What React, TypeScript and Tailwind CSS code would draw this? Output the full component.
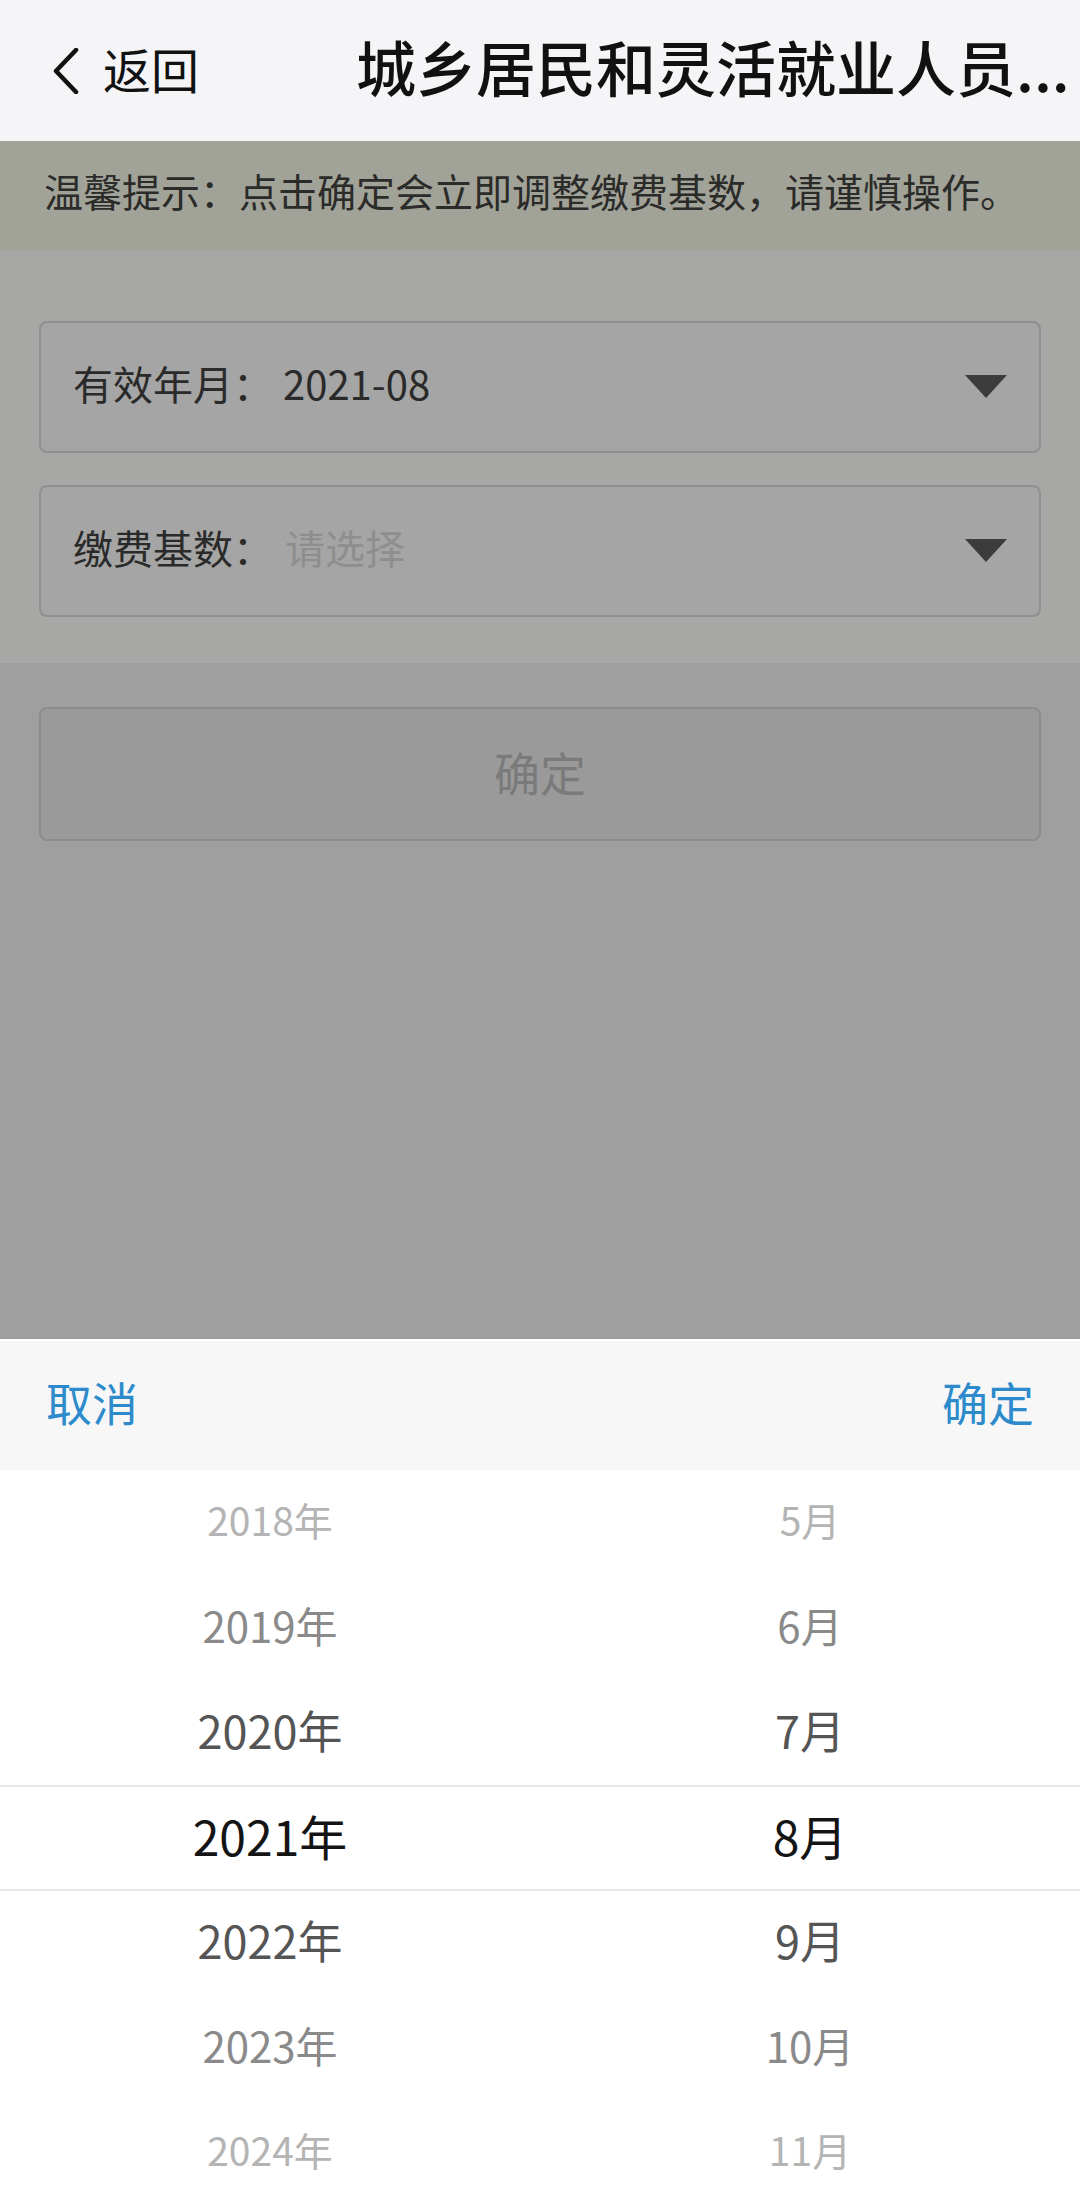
import React from 'react'

const years = ['2018年', '2019年', '2020年', '2021年', '2022年', '2023年', '2024年']
const months = ['5月', '6月', '7月', '8月', '9月', '10月', '11月']

// distance from the selected row -> look of the wheel item
const rowStyle = [
    'text-[48px] text-[#141414]',
    'text-[45px] text-[#555555]',
    'text-[42px] text-[#8a8a8a]',
    'text-[39px] text-[#b4b4b4]',
]

const SelectField = ({ label, value, placeholder }: { label: string; value?: string; placeholder?: string }) => {
    return (
        <div className="h-[132px] rounded-[8px] border-2 border-[#8f8f8f] bg-[#a5a5a5] pl-[32px] pr-[32px] flex items-center justify-between">
            <div className="flex items-center text-[40px] leading-none pb-[8px]">
                <span className="text-[#2a2a2a]">{label}：</span>
                {value ? (
                    <span className="text-[#2a2a2a] ml-[10px]">{value}</span>
                ) : (
                    <span className="text-[#8e8e8e] ml-[12px]">{placeholder}</span>
                )}
            </div>
            <svg width="42" height="24" viewBox="0 0 42 24">
                <path d="M0 0 L42 0 L21 23 Z" fill="#3c3c3c" />
            </svg>
        </div>
    )
}

const Wheel = ({ items }: { items: string[] }) => {
    return (
        <div className="flex flex-col">
            {items.map((item, i) => (
                <div
                    key={item}
                    className={`h-[105px] flex items-center justify-center leading-none pb-[6px] ${rowStyle[Math.abs(i - 3)]}`}
                >
                    {item}
                </div>
            ))}
        </div>
    )
}

const App = () => {
    return (
        <div className="w-[1080px] h-[2204px] overflow-hidden flex flex-col bg-white font-['Noto_Sans_CJK_SC','Noto_Sans',sans-serif]">
            {/* header */}
            <div className="h-[141px] shrink-0 bg-[#f5f5f7] flex items-center">
                <div className="flex items-center pl-[52px] w-[356px] shrink-0">
                    <svg width="27" height="46" viewBox="0 0 27 46">
                        <path d="M24 2 L4 23 L24 44" fill="none" stroke="#111111" strokeWidth="4.5" strokeLinecap="round" strokeLinejoin="round" />
                    </svg>
                    <span className="ml-[24px] text-[48px] leading-none text-[#111111] pb-[6px]">返回</span>
                </div>
                <div className="text-[60px] leading-none text-[#111111] font-medium whitespace-nowrap pb-[10px]">
                    城乡居民和灵活就业人员...
                </div>
            </div>

            {/* dimmed page */}
            <div className="h-[1198px] shrink-0 flex flex-col">
                <div className="h-[109px] bg-[#a2a398] flex items-center pl-[44px] pb-[10px]">
                    <span className="text-[39px] leading-none text-[#2b2b29] whitespace-nowrap">
                        温馨提示：点击确定会立即调整缴费基数，请谨慎操作。
                    </span>
                </div>
                <div className="h-[413px] bg-[#a7a7a5] px-[39px] pt-[71px] flex flex-col gap-[32px]">
                    <SelectField label="有效年月" value="2021-08" />
                    <SelectField label="缴费基数" placeholder="请选择" />
                </div>
                <div className="flex-1 bg-[#9f9f9f] px-[39px] pt-[44px]">
                    <div className="h-[134px] rounded-[8px] border-2 border-[#8c8c8c] bg-[#9a9a9a] flex items-center justify-center pb-[6px]">
                        <span className="text-[46px] leading-none text-[#7a7a7a]">确定</span>
                    </div>
                </div>
            </div>

            {/* picker */}
            <div className="flex-1 flex flex-col bg-white">
                <div className="h-[131px] shrink-0 bg-[#f7f7f7] border-t-2 border-white flex items-center justify-between px-[46px] pb-[10px]">
                    <span className="text-[46px] leading-none text-[#2d8bcb]">取消</span>
                    <span className="text-[46px] leading-none text-[#2d8bcb]">确定</span>
                </div>
                <div className="relative flex-1">
                    <div className="grid grid-cols-2">
                        <Wheel items={years} />
                        <Wheel items={months} />
                    </div>
                    <div className="absolute left-0 right-0 top-[315px] h-[106px] border-y-2 border-[#e6e6e6] pointer-events-none" />
                </div>
            </div>
        </div>
    )
}

export default App
